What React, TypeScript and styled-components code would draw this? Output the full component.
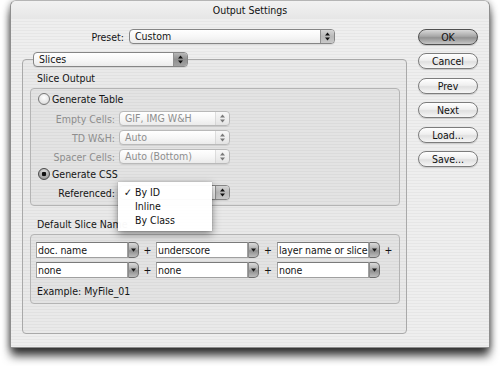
import styled, { createGlobalStyle } from 'styled-components'

const GlobalStyle = createGlobalStyle`
  html, body {
    margin: 0;
    padding: 0;
    background: #ffffff;
  }
  body {
    font-family: "DejaVu Sans Condensed", "DejaVu Sans", sans-serif;
    font-stretch: condensed;
    font-size: 10.5px;
    color: #151515;
  }
`

const Stepper = () => (
  <svg width="5" height="9" viewBox="0 0 5 9">
    <polygon points="0,3.6 2.5,0.4 5,3.6" fill="#111" />
    <polygon points="0,5.4 5,5.4 2.5,8.6" fill="#111" />
  </svg>
)

const DownArrow = () => (
  <svg width="5" height="4" viewBox="0 0 5 4">
    <polygon points="0,0.5 5,0.5 2.5,3.8" fill="#1a1a1a" />
  </svg>
)

const Popup = ({ w, text, disabled, dark }: { w: number; text?: string; disabled?: boolean; dark?: boolean }) => (
  <PopupBox $w={w} $disabled={disabled}>
    <PopupText>{text}</PopupText>
    <PopupKnob $disabled={disabled} $dark={dark}>
      <Stepper />
    </PopupKnob>
  </PopupBox>
)

const Combo = ({ text }: { text: string }) => (
  <ComboBox>
    <ComboField>{text}</ComboField>
    <ComboArrow>
      <DownArrow />
    </ComboArrow>
  </ComboBox>
)

const App = () => {
  return (
    <>
      <GlobalStyle />
      <Page>
        <Window>
          <TitleBar>Output Settings</TitleBar>
          <Body>
            <Main>
              <PresetRow>
                <PresetLabel>Preset:</PresetLabel>
                <Popup w={206} text="Custom" />
              </PresetRow>

              <SectionPicker>
                <Popup w={155} text="Slices" dark />
              </SectionPicker>

              <OuterBox>
                <BoxTitle>Slice Output</BoxTitle>
                <InnerBox>
                  <RadioRow>
                    <Radio />
                    <span>Generate Table</span>
                  </RadioRow>
                  <Rows>
                    <OptionRow>
                      <OptionLabel $disabled>Empty Cells:</OptionLabel>
                      <Popup w={111} text="GIF, IMG W&H" disabled />
                    </OptionRow>
                    <OptionRow>
                      <OptionLabel $disabled>TD W&H:</OptionLabel>
                      <Popup w={111} text="Auto" disabled />
                    </OptionRow>
                    <OptionRow>
                      <OptionLabel $disabled>Spacer Cells:</OptionLabel>
                      <Popup w={111} text="Auto (Bottom)" disabled />
                    </OptionRow>
                  </Rows>
                  <RadioRow>
                    <Radio $checked />
                    <span>Generate CSS</span>
                  </RadioRow>
                  <OptionRow $top={5}>
                    <OptionLabel>Referenced:</OptionLabel>
                    <MenuAnchor>
                      {/* the open menu covers the popup's own label */}
                      <Popup w={111} />
                      <Menu>
                        <MenuItem>
                          <Check>✓</Check>By ID
                        </MenuItem>
                        <MenuItem>Inline</MenuItem>
                        <MenuItem>By Class</MenuItem>
                      </Menu>
                    </MenuAnchor>
                  </OptionRow>
                </InnerBox>

                <BoxTitle $top={11}>Default Slice Name</BoxTitle>
                <NameBox>
                  <ComboGrid>
                    <Combo text="doc. name" />
                    <Plus>+</Plus>
                    <Combo text="underscore" />
                    <Plus>+</Plus>
                    <Combo text="layer name or slice" />
                    <Plus>+</Plus>
                    <Combo text="none" />
                    <Plus>+</Plus>
                    <Combo text="none" />
                    <Plus>+</Plus>
                    <Combo text="none" />
                    <span />
                  </ComboGrid>
                  <Example>Example: MyFile_01</Example>
                </NameBox>
              </OuterBox>
            </Main>

            <Side>
              <Button $default>OK</Button>
              <Button $gap={8}>Cancel</Button>
              <Button $gap={9}>Prev</Button>
              <Button $gap={8}>Next</Button>
              <Button $gap={9}>Load...</Button>
              <Button $gap={8}>Save...</Button>
            </Side>
          </Body>
        </Window>
      </Page>
    </>
  )
}

const Page = styled.div`
  height: 366px;
  overflow: hidden;
  padding-left: 10px;
  box-sizing: border-box;
`

const Window = styled.div`
  width: 480px;
  height: 348px;
  box-sizing: border-box;
  border: 1px solid #8e8e8e;
  border-top-color: #b5b5b5;
  border-radius: 6px 6px 0 0;
  background: repeating-linear-gradient(to bottom, #eeeeee 0px, #eeeeee 2px, #e6e6e6 2px, #e6e6e6 3px);
  box-shadow: 0 9px 10px -1px rgba(0, 0, 0, 0.75), 0 1px 7px rgba(0, 0, 0, 0.4);
`

const TitleBar = styled.div`
  height: 18px;
  line-height: 19px;
  text-align: center;
  color: #111;
  border-radius: 6px 6px 0 0;
  background: linear-gradient(#f2f2f2, #e6e6e6);
  box-sizing: border-box;
`

const Body = styled.div`
  display: flex;
  padding: 10px 11px 0 11px;
`

const Main = styled.div`
  width: 385px;
  display: flex;
  flex-direction: column;
`

const Side = styled.div`
  width: 60px;
  margin-left: 11px;
  display: flex;
  flex-direction: column;
`

const PresetRow = styled.div`
  display: flex;
  align-items: center;
  height: 15px;
`

const PresetLabel = styled.span`
  width: 102px;
  margin-right: 5px;
  text-align: right;
`

const PopupBox = styled.div<{ $w: number; $disabled?: boolean }>`
  width: ${p => p.$w}px;
  height: 15px;
  box-sizing: border-box;
  display: flex;
  align-items: center;
  border: 1px solid ${p => (p.$disabled ? '#b9b9b9' : '#858585')};
  border-radius: 4px;
  background: linear-gradient(#ffffff, #f7f7f7 50%, #ebebeb);
  color: ${p => (p.$disabled ? '#8e8e8e' : '#151515')};
  overflow: hidden;
  box-shadow: 0 1px 0 rgba(0, 0, 0, 0.08);
`

const PopupText = styled.span`
  flex: 1;
  padding-left: 5px;
  white-space: nowrap;
  line-height: 13px;
`

const PopupKnob = styled.span<{ $disabled?: boolean; $dark?: boolean }>`
  width: 13px;
  align-self: stretch;
  display: flex;
  align-items: center;
  justify-content: center;
  border-left: 1px solid ${p => (p.$disabled ? '#c4c4c4' : '#909090')};
  background: ${p =>
    p.$dark
      ? 'linear-gradient(#b8b8b8, #8f8f8f 50%, #a2a2a2)'
      : p.$disabled
      ? 'linear-gradient(#f0f0f0, #dedede)'
      : 'linear-gradient(#d4d4d4, #b9b9b9 50%, #c8c8c8)'};
  opacity: ${p => (p.$disabled ? 0.55 : 1)};
`

const SectionPicker = styled.div`
  margin-top: 8px;
  margin-left: 11px;
  position: relative;
  z-index: 1;
`

const OuterBox = styled.div`
  margin-top: -8px;
  height: 275px;
  box-sizing: border-box;
  border: 1px solid #a9a9a9;
  border-radius: 4px;
  background: rgba(0, 0, 0, 0.018);
  padding: 11px 6px 0 7px;
  display: flex;
  flex-direction: column;
`

const BoxTitle = styled.div<{ $top?: number }>`
  margin-top: ${p => p.$top ?? 0}px;
  margin-left: 7px;
  height: 14px;
  line-height: 14px;
  margin-bottom: 3px;
`

const InnerBox = styled.div`
  height: 118px;
  box-sizing: border-box;
  border: 1px solid #b4b4b4;
  border-radius: 4px;
  background: rgba(0, 0, 0, 0.025);
  padding: 4px 7px 0 7px;
  display: flex;
  flex-direction: column;
`

const RadioRow = styled.div`
  display: flex;
  align-items: center;
  gap: 2px;
  height: 12px;
`

const Radio = styled.span<{ $checked?: boolean }>`
  width: 12px;
  height: 12px;
  box-sizing: border-box;
  border-radius: 50%;
  border: 1px solid ${p => (p.$checked ? '#4a4a4a' : '#777')};
  background: ${p =>
    p.$checked
      ? 'radial-gradient(circle at 50% 50%, #111 0 2px, transparent 2.6px), radial-gradient(circle at 50% 30%, #e4e4e4, #9a9a9a 75%)'
      : 'radial-gradient(circle at 50% 35%, #ffffff, #e6e6e6 60%, #c8c8c8)'};
`

const Rows = styled.div`
  display: flex;
  flex-direction: column;
  gap: 4px;
  margin: 6px 0 4px;
`

const OptionRow = styled.div<{ $top?: number }>`
  display: flex;
  align-items: center;
  margin-top: ${p => p.$top ?? 0}px;
`

const OptionLabel = styled.span<{ $disabled?: boolean }>`
  width: 77px;
  margin-right: 4px;
  text-align: right;
  color: ${p => (p.$disabled ? '#8e8e8e' : '#151515')};
`

const MenuAnchor = styled.div`
  position: relative;
`

const Menu = styled.div`
  position: absolute;
  left: -1px;
  top: -3px;
  width: 94px;
  padding: 3px 0 4px;
  background: rgba(255, 255, 255, 0.97);
  box-shadow: 0 3px 8px rgba(0, 0, 0, 0.45), 0 0 1px rgba(0, 0, 0, 0.35);
  z-index: 5;
`

const MenuItem = styled.div`
  position: relative;
  height: 14px;
  line-height: 14px;
  padding-left: 17px;
  color: #111;
`

const Check = styled.span`
  position: absolute;
  left: 6px;
  top: 0;
`

const NameBox = styled.div`
  height: 70px;
  box-sizing: border-box;
  border: 1px solid #b4b4b4;
  border-radius: 4px;
  background: rgba(0, 0, 0, 0.025);
  padding: 7px 0 0 5px;
`

const ComboGrid = styled.div`
  display: grid;
  grid-template-columns: 103px 17px 103px 18px 103px 17px;
  row-gap: 4px;
  align-items: center;
`

const ComboBox = styled.div`
  display: flex;
  height: 16px;
`

const ComboField = styled.div`
  flex: 1;
  box-sizing: border-box;
  background: #ffffff;
  border: 1px solid #a0a0a0;
  border-top-color: #7a7a7a;
  padding-left: 1px;
  line-height: 14px;
  letter-spacing: -0.1px;
  white-space: nowrap;
  overflow: hidden;
`

const ComboArrow = styled.div`
  width: 11px;
  box-sizing: border-box;
  display: flex;
  align-items: center;
  justify-content: center;
  border: 1px solid #6c6c6c;
  border-left-color: #8a8a8a;
  border-radius: 0 5px 5px 0;
  background: linear-gradient(#dcdcdc, #a6a6a6 50%, #8e8e8e 55%, #bdbdbd);
`

const Plus = styled.span`
  text-align: center;
`

const Example = styled.div`
  margin-top: 5px;
  margin-left: 1px;
  height: 16px;
  line-height: 16px;
`

const Button = styled.div<{ $default?: boolean; $gap?: number }>`
  height: 16px;
  margin-top: ${p => p.$gap ?? 0}px;
  box-sizing: border-box;
  border-radius: 8px;
  border: 1px solid ${p => (p.$default ? '#505050' : '#7c7c7c')};
  background: ${p =>
    p.$default
      ? 'linear-gradient(#d9d9d9, #a8a8a8 45%, #929292 55%, #c6c6c6)'
      : 'linear-gradient(#ffffff, #efefef 45%, #e0e0e0 55%, #f6f6f6)'};
  text-align: center;
  line-height: 14px;
  color: #111;
  box-shadow: 0 1px 1px rgba(0, 0, 0, 0.15);
`

export default App
